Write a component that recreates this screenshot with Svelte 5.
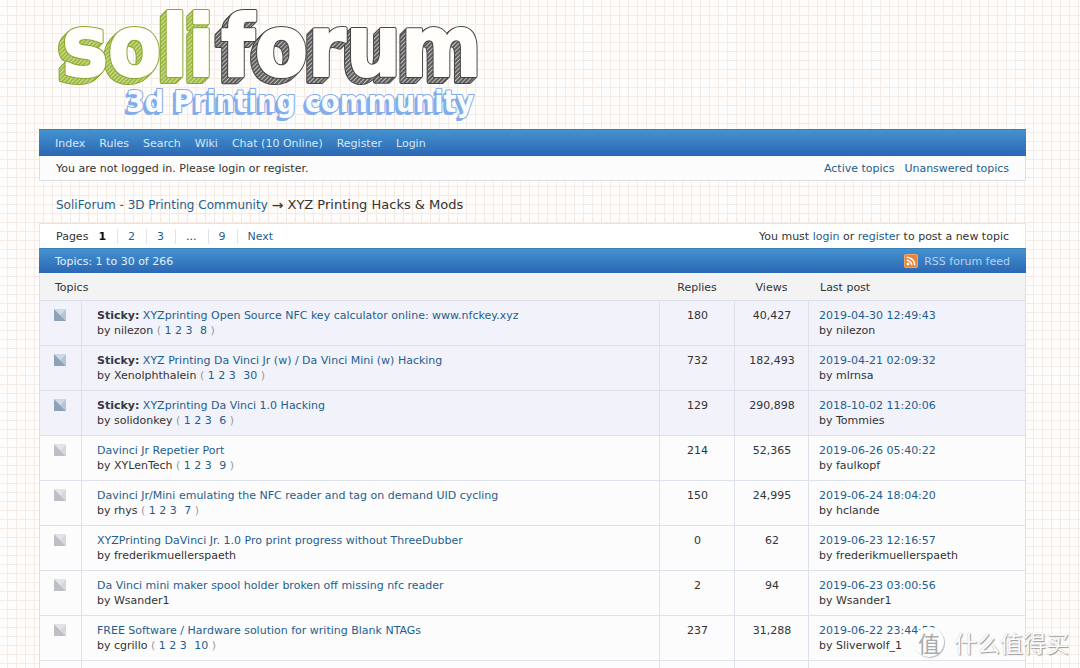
<script>
  const menu = ['Index', 'Rules', 'Search', 'Wiki', 'Chat (10 Online)', 'Register', 'Login'];

  const topics = [
    { sticky: true, title: 'XYZprinting Open Source NFC key calculator online: www.nfckey.xyz', by: 'nilezon', last: '8', replies: '180', views: '40,427', date: '2019-04-30 12:49:43', poster: 'nilezon' },
    { sticky: true, title: 'XYZ Printing Da Vinci Jr (w) / Da Vinci Mini (w) Hacking', by: 'Xenolphthalein', last: '30', replies: '732', views: '182,493', date: '2019-04-21 02:09:32', poster: 'mlrnsa' },
    { sticky: true, title: 'XYZprinting Da Vinci 1.0 Hacking', by: 'solidonkey', last: '6', replies: '129', views: '290,898', date: '2018-10-02 11:20:06', poster: 'Tommies' },
    { title: 'Davinci Jr Repetier Port', by: 'XYLenTech', last: '9', replies: '214', views: '52,365', date: '2019-06-26 05:40:22', poster: 'faulkopf' },
    { title: 'Davinci Jr/Mini emulating the NFC reader and tag on demand UID cycling', by: 'rhys', last: '7', replies: '150', views: '24,995', date: '2019-06-24 18:04:20', poster: 'hclande' },
    { title: 'XYZPrinting DaVinci Jr. 1.0 Pro print progress without ThreeDubber', by: 'frederikmuellerspaeth', replies: '0', views: '62', date: '2019-06-23 12:16:57', poster: 'frederikmuellerspaeth' },
    { title: 'Da Vinci mini maker spool holder broken off missing nfc reader', by: 'Wsander1', replies: '2', views: '94', date: '2019-06-23 03:00:56', poster: 'Wsander1' },
    { title: 'FREE Software / Hardware solution for writing Blank NTAGs', by: 'cgrillo', last: '10', replies: '237', views: '31,288', date: '2019-06-22 23:44:52', poster: 'Sliverwolf_1' }
  ];

  // Extrusion layers of the hand-drawn lettering, deepest first.
  const deep = [6, 5, 4, 3, 2, 1];
  const shallow = [3, 2, 1];
</script>

<div class="page">
  <header>
    <svg class="logo" width="440" height="129" viewBox="0 0 440 129" role="img" aria-label="SoliForum 3D Printing Community">
      <defs>
        <pattern id="hatch-green" width="3" height="3" patternUnits="userSpaceOnUse" patternTransform="rotate(45)">
          <rect width="3" height="3" fill="#9dba42" />
          <rect width="1" height="3" fill="#d3e09c" />
        </pattern>
        <pattern id="hatch-dark" width="3" height="3" patternUnits="userSpaceOnUse" patternTransform="rotate(45)">
          <rect width="3" height="3" fill="#5c5c5c" />
          <rect width="1" height="3" fill="#bdbdbd" />
        </pattern>
        <text id="word-soli" class="big" x="23" y="76">soli</text>
        <text id="word-forum" class="big" x="182" y="76">forum</text>
        <text id="word-tagline" class="small" x="87" y="112">3d Printing community</text>
      </defs>
      <g class="green">
        {#each deep as d}<use class="edge" href="#word-soli" x={-d} y={d} />{/each}
        {#each deep as d}<use class="side" href="#word-soli" x={-d} y={d} />{/each}
        <use class="line" href="#word-soli" />
        <use class="face" href="#word-soli" />
      </g>
      <g class="dark">
        {#each deep as d}<use class="edge" href="#word-forum" x={-d} y={d} />{/each}
        {#each deep as d}<use class="side" href="#word-forum" x={-d} y={d} />{/each}
        <use class="line" href="#word-forum" />
        <use class="face" href="#word-forum" />
      </g>
      <g class="blue">
        {#each shallow as d}<use class="side" href="#word-tagline" x={-d} y={d} />{/each}
        <use class="line" href="#word-tagline" />
        <use class="face" href="#word-tagline" />
      </g>
    </svg>
  </header>

  <nav class="bar">
    {#each menu as item}<a href="#top">{item}</a>{/each}
  </nav>
  <div class="welcome">
    <span>You are not logged in. Please login or register.</span>
    <span class="quick"><a href="#active">Active topics</a><a href="#unanswered">Unanswered topics</a></span>
  </div>

  <div class="crumbs">
    <a href="#home">SoliForum - 3D Printing Community</a><span class="arrow">→</span><h1>XYZ Printing Hacks &amp; Mods</h1>
  </div>

  <div class="paging">
    <div class="pages">
      <span>Pages</span><strong>1</strong><a href="#p2">2</a><a href="#p3">3</a><span class="gap">...</span><a href="#p9">9</a><a href="#next">Next</a>
    </div>
    <p>You must <a href="#login">login</a> or <a href="#register">register</a> to post a new topic</p>
  </div>

  <div class="bar head">
    <h2>Topics: 1 to 30 of 266</h2>
    <a class="rss" href="#rss">
      <svg width="14" height="14" viewBox="0 0 14 14" aria-hidden="true">
        <rect width="14" height="14" rx="2" fill="#e8853a" />
        <rect x="0.5" y="0.5" width="13" height="13" rx="1.5" fill="none" stroke="#f0a468" />
        <circle cx="4" cy="10" r="1.4" fill="#fff" />
        <path d="M2.7 6.2a5.1 5.1 0 0 1 5.1 5.1M2.7 3.2a8.1 8.1 0 0 1 8.1 8.1" fill="none" stroke="#fff" stroke-width="1.5" />
      </svg>RSS forum feed</a>
  </div>

  <table>
    <colgroup>
      <col class="c-icon" /><col /><col class="c-replies" /><col class="c-views" /><col class="c-last" />
    </colgroup>
    <thead>
      <tr><th colspan="2">Topics</th><th class="num">Replies</th><th class="num">Views</th><th class="lasthead">Last post</th></tr>
    </thead>
    <tbody>
      {#each topics as t}
        <tr class:sticky={t.sticky}>
          <td class="icon">
            <svg width="12" height="12" viewBox="0 0 12 12" aria-hidden="true">
              <path class="t1" d="M0 0H12L6 6Z" /><path class="t2" d="M12 0V12L6 6Z" /><path class="t3" d="M0 0L12 12H0Z" />
            </svg>
          </td>
          <td class="subject">
            {#if t.sticky}<strong>Sticky:</strong>{' '}{/if}<a href="#topic">{t.title}</a><br />
            by {t.by}
            {#if t.last}<span class="sub">( <a href="#s1">1</a> <a href="#s2">2</a> <a href="#s3">3</a> <a class="end" href="#end">{t.last}</a> )</span>{/if}
          </td>
          <td class="num">{t.replies}</td>
          <td class="num">{t.views}</td>
          <td class="last"><a href="#post">{t.date}</a><br />by {t.poster}</td>
        </tr>
      {/each}
      <tr class="rest"><td></td><td></td><td></td><td></td><td></td></tr>
    </tbody>
  </table>
</div>

<div class="watermark"><span class="seal">值</span><span>什么值得买</span></div>

<style>
  :global(html) {
    height: 100%;
    overflow: hidden;
  }
  :global(body) {
    margin: 0;
    height: 100%;
    overflow: hidden;
    background-color: #fffdfb;
    background-image:
      linear-gradient(to right, #f4ebe4 1px, transparent 1px),
      linear-gradient(to bottom, #f4ebe4 1px, transparent 1px);
    background-size: 9px 9px;
    background-position: 7px 6px;
  }
  .page {
    padding: 0 54px 0 39px;
    font: 11px/15px Verdana, "DejaVu Sans", sans-serif;
    color: #333;
  }
  a {
    color: #1f5e8e;
    text-decoration: none;
  }
  header {
    height: 129px;
  }
  .logo {
    display: block;
  }
  .logo text {
    font-family: "DejaVu Sans Condensed", "DejaVu Sans", sans-serif;
    font-stretch: condensed;
    font-weight: bold;
    stroke-linejoin: round;
  }
  .logo .big {
    font-size: 86px;
  }
  .logo .small {
    font-size: 30px;
  }
  .edge {
    stroke-width: 4px;
  }
  .side {
    stroke-width: 2px;
  }
  .line {
    stroke-width: 4px;
  }
  .face {
    fill: #fffefb;
    stroke: #fffefb;
    stroke-width: 2px;
  }
  .green .edge,
  .green .line {
    fill: #8aa634;
    stroke: #8aa634;
  }
  .green .side {
    fill: url(#hatch-green);
    stroke: url(#hatch-green);
  }
  .dark .edge,
  .dark .line {
    fill: #444;
    stroke: #444;
  }
  .dark .side {
    fill: url(#hatch-dark);
    stroke: url(#hatch-dark);
  }
  .blue .side {
    fill: #83acea;
    stroke: none;
  }
  .blue .line {
    fill: #83acea;
    stroke: #83acea;
    stroke-width: 2px;
  }
  .blue .face {
    fill: #fafcff;
    stroke: none;
  }
  .bar {
    display: flex;
    align-items: center;
    gap: 14px;
    height: 27px;
    padding: 0 16px;
    border: 1px solid #3b7fb9;
    border-width: 1px 0 0;
    box-sizing: border-box;
    background: linear-gradient(#4492cf, #2b67b5);
    color: #e2f0fb;
  }
  .bar a {
    color: #d5e8f8;
  }
  .welcome {
    display: flex;
    justify-content: space-between;
    padding: 5px 16px 4px;
    border: 1px solid #dcdfe8;
    border-top: 0;
    background: #fcfcfc;
  }
  .quick {
    display: flex;
    gap: 10px;
  }
  .crumbs {
    display: flex;
    align-items: center;
    padding: 14px 17px 8px;
    line-height: 20px;
    font-size: 12px;
  }
  .arrow {
    margin: 0 4px;
    font-size: 14px;
  }
  h1 {
    margin: 0;
    font-size: 13px;
    font-weight: normal;
  }
  .paging {
    display: flex;
    justify-content: space-between;
    align-items: center;
    height: 24px;
    padding: 0 16px;
    border: 1px solid #e4e6ec;
    border-bottom: 0;
    background: #fff;
  }
  .pages {
    display: flex;
  }
  .pages strong {
    color: #111;
    padding: 0 11px 0 10px;
  }
  .pages a,
  .pages .gap {
    padding: 0 11px 0 10px;
    border-left: 1px solid #dfe2ea;
  }
  p,
  h2 {
    margin: 0;
    font-size: 11px;
    font-weight: normal;
  }
  .head {
    justify-content: space-between;
    height: 25px;
  }
  .bar .rss {
    display: flex;
    align-items: center;
    gap: 6px;
    color: #b5d3ef;
  }
  table {
    width: 100%;
    table-layout: fixed;
    border-collapse: separate;
    border-spacing: 0;
    border: 1px solid #dde0ea;
    border-top: 0;
    background: #fcfcfc;
  }
  .c-icon {
    width: 41px;
  }
  .c-replies {
    width: 75px;
  }
  .c-views {
    width: 74px;
  }
  .c-last {
    width: 217px;
  }
  th {
    height: 27px;
    padding: 1px 15px 0;
    box-sizing: border-box;
    background: #f3f3f3;
    font-weight: normal;
    text-align: left;
  }
  th.num,
  td.num {
    padding-left: 1px;
    padding-right: 0;
    text-align: center;
  }
  th.lasthead {
    padding-left: 12px;
  }
  td {
    height: 45px;
    padding: 7px 10px 0;
    box-sizing: border-box;
    border-top: 1px solid #dde1ec;
    border-left: 1px solid #dde1ec;
    vertical-align: top;
  }
  td.icon {
    padding: 8px 0 0 14px;
    border-left: 0;
  }
  td.subject {
    padding-left: 15px;
  }
  .sticky td {
    background: #f1f2fa;
  }
  .rest td:first-child {
    border-left: 0;
  }
  strong {
    color: #333a44;
  }
  .sub {
    color: #999;
  }
  .end {
    margin-left: 4px;
  }
  .icon svg {
    display: block;
  }
  .t1 {
    fill: #e4e4e8;
  }
  .t2 {
    fill: #d6d7dc;
  }
  .t3 {
    fill: #bdbfc6;
  }
  .sticky .t1 {
    fill: #cddae6;
  }
  .sticky .t2 {
    fill: #b4c5d5;
  }
  .sticky .t3 {
    fill: #8da2b7;
  }
  .watermark {
    position: absolute;
    right: 11px;
    bottom: 9px;
    display: flex;
    align-items: center;
    gap: 10px;
    font: 23px/34px "Noto Sans CJK SC", sans-serif;
    color: #fdfdfd;
    text-shadow: 1px 1px 1px #999, 0 0 1px #bbb;
  }
  .seal {
    width: 30px;
    height: 30px;
    border-radius: 50%;
    background: #fdfdfd;
    box-shadow: 1px 1px 1px #bbb;
    color: #aaa;
    font-size: 22px;
    line-height: 30px;
    text-align: center;
    text-shadow: none;
  }
</style>
